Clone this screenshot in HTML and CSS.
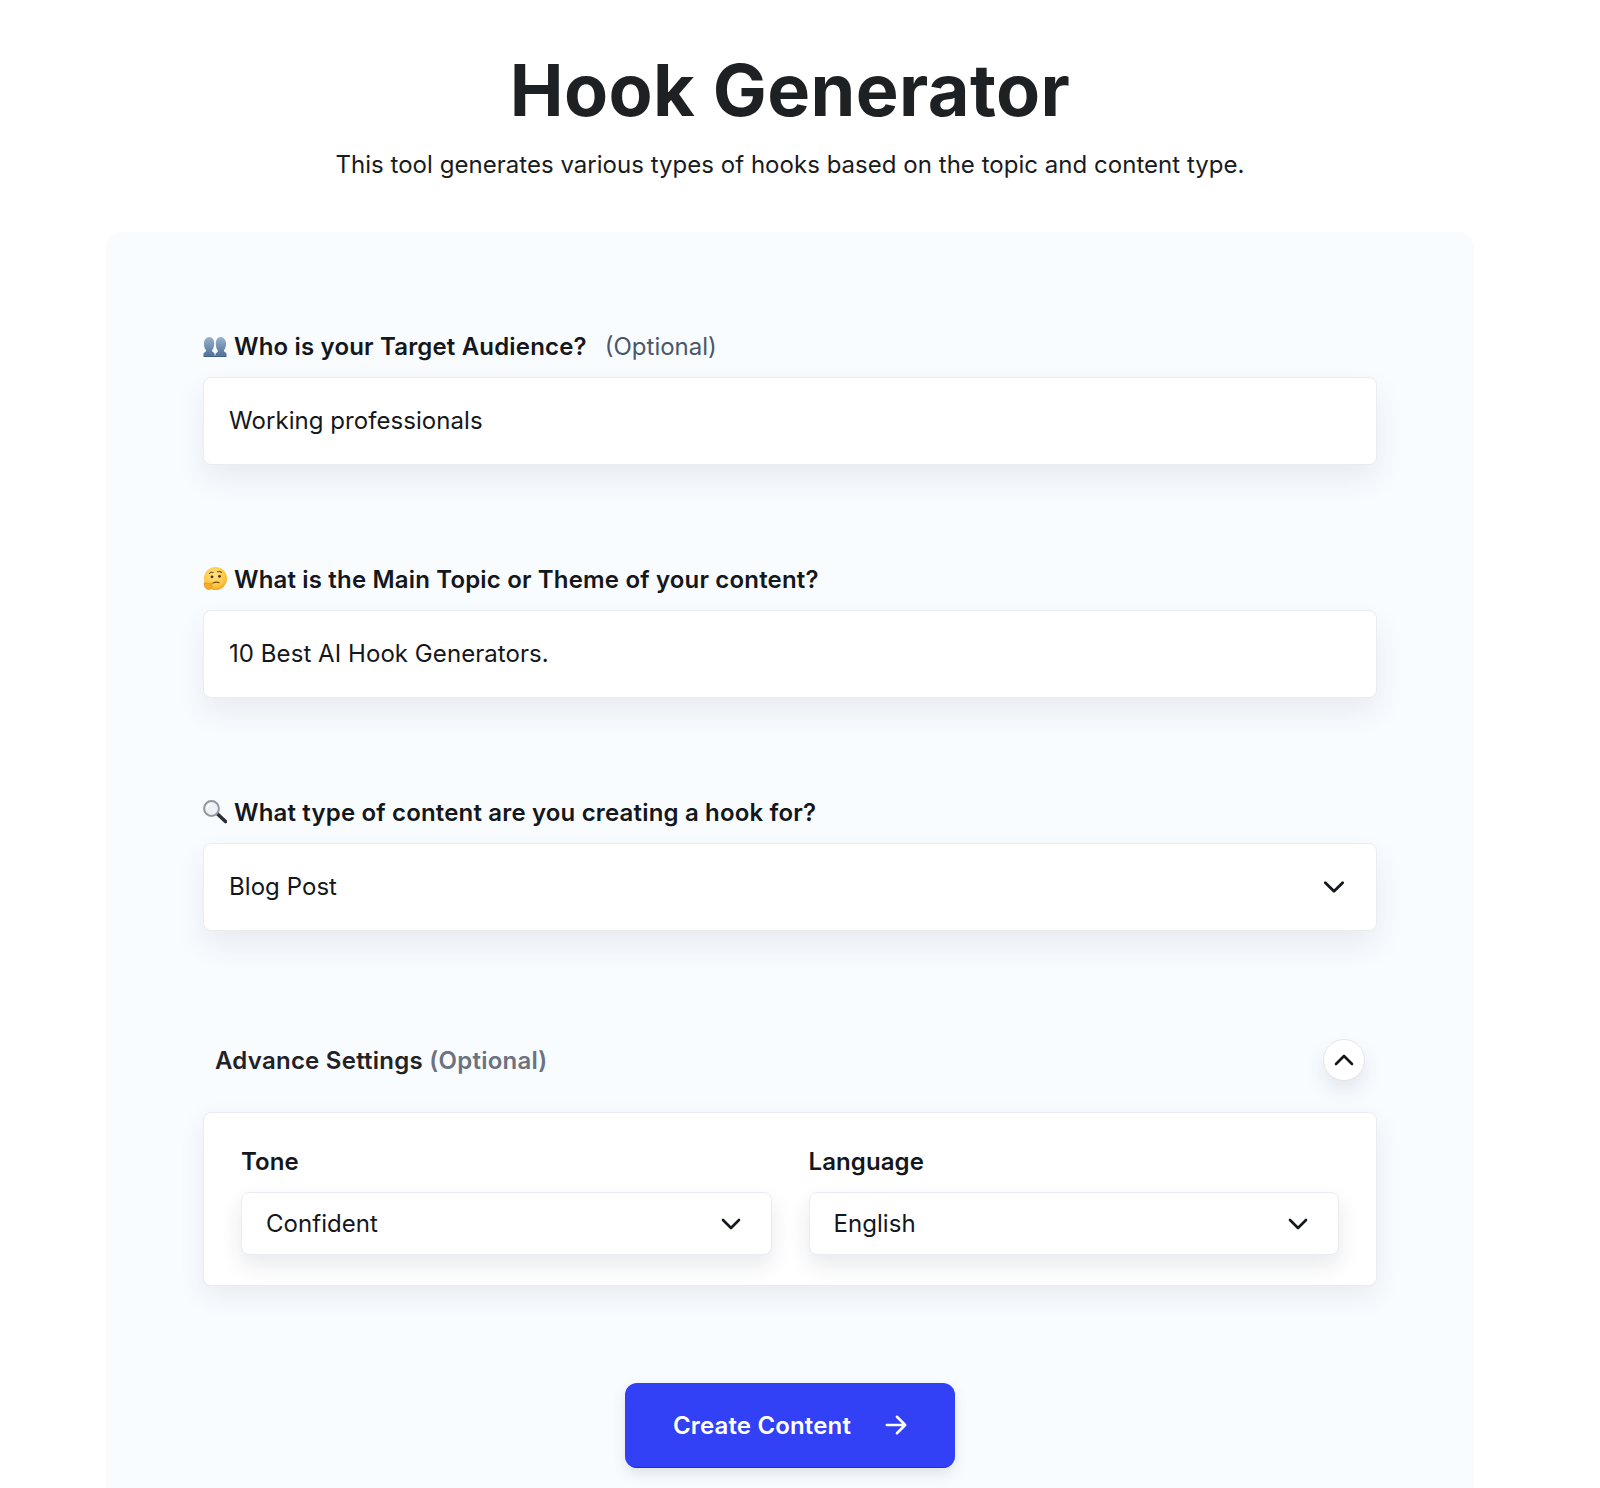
FILE: index.html
```html
<!DOCTYPE html>
<html lang="en">
<head>
<meta charset="utf-8">
<title>Hook Generator</title>
<link rel="stylesheet" href="styles.css">
</head>
<body>
<header class="head">
  <h1 class="title">Hook Generator</h1>
  <p class="sub">This tool generates various types of hooks based on the topic and content type.</p>
</header>
<main class="panel">
  <section class="field">
    <label class="label">
      <svg class="emoji" viewBox="0 0 24 24"><defs><linearGradient id="bust" x1="0" y1="0" x2="0" y2="1"><stop offset="0" stop-color="#9ab2cc"/><stop offset="1" stop-color="#4f7299"/></linearGradient></defs><g transform="translate(0 -4.500) scale(1 1.250)"><path fill="url(#bust)" d="M6.500 6c3 0 4.700 2.300 4.700 5.200 0 2.200-.9 4-1.900 5.100-.4.500-.2 1.100.3 1.400l1.900 1.300V21H.5v-2l2-1.300c.5-.3.700-.9.300-1.400-1-1.100-1.900-2.900-1.900-5.100C.9 8.300 3.500 6 6.500 6z"/><path fill="url(#bust)" d="M17.500 6c3 0 5.600 2.300 5.600 5.200 0 2.200-.9 4-1.900 5.100-.4.500-.2 1.100.3 1.400l2 1.300v2H12.500v-1.700l1.900-1.300c.5-.3.700-.9.300-1.400-1-1.100-1.900-2.900-1.900-5.100C12.800 8.300 14.500 6 17.500 6z"/><rect x=".5" y="20.800" width="23" height="1.200" fill="#3d5f88"/></g></svg>
      <span>Who is your Target Audience?</span><span class="opt">(Optional)</span>
    </label>
    <div class="box">Working professionals</div>
  </section>
  <section class="field">
    <label class="label">
      <svg class="emoji" viewBox="0 0 24 24"><defs><radialGradient id="face" cx=".45" cy=".35" r=".7"><stop offset="0" stop-color="#ffe58a"/><stop offset=".7" stop-color="#fcc53f"/><stop offset="1" stop-color="#f29f1f"/></radialGradient></defs><circle cx="12.500" cy="11.500" r="11.500" fill="url(#face)"/><path d="M6.500 6.500c1-1.200 2.500-1.500 3.700-1M14.500 4.800c1.500-.6 3-.3 4 .7" fill="none" stroke="#7a4a12" stroke-width="1.100" stroke-linecap="round"/><circle cx="9" cy="9.800" r="1.400" fill="#4a2c0c"/><circle cx="16.500" cy="9.300" r="1.400" fill="#4a2c0c"/><path d="M10 16c2-.9 4-1 6-.4" fill="none" stroke="#7a4a12" stroke-width="1.200" stroke-linecap="round"/><path d="M1 16c1.200-.8 3.200-.2 3.800.7l3.700-.8c1-.2 1.400 1 .5 1.400l-1.800.8 1.400.6c.8.500.5 1.500-.2 1.600.2.900-.4 1.400-1 1.400 0 .9-.8 1.300-1.600 1.100-2.500-.3-4.700-2.600-4.800-5.800z" fill="#f7a92c" stroke="#d98a17" stroke-width=".5"/></svg>
      <span>What is the Main Topic or Theme of your content?</span>
    </label>
    <div class="box">10 Best AI Hook Generators.</div>
  </section>
  <section class="field">
    <label class="label">
      <svg class="emoji" viewBox="0 0 24 24"><path d="M14.500 14l8 7.500" stroke="#2a3036" stroke-width="3.600" stroke-linecap="round"/><circle cx="8.500" cy="8.500" r="7.400" fill="#eef2f6" stroke="#8f979f" stroke-width="2"/><path d="M4 7.500c.6-2 2.200-3.300 4.200-3.500" fill="none" stroke="#fff" stroke-width="1.600" stroke-linecap="round"/></svg>
      <span>What type of content are you creating a hook for?</span>
    </label>
    <div class="box box-select"><span>Blog Post</span><svg class="chev" viewBox="0 0 24 24"><path d="M4 8l8 8 8-8"/></svg></div>
  </section>
  <section class="adv">
    <div class="adv-head">
      <h2 class="adv-title">Advance Settings <span class="adv-opt">(Optional)</span></h2>
      <button class="round" type="button" aria-label="Collapse"><svg class="chev chev-up" viewBox="0 0 24 24"><path d="M4 16l8-8 8 8"/></svg></button>
    </div>
    <div class="adv-card">
      <div class="adv-col">
        <div class="mini-label">Tone</div>
        <div class="mini-box"><span>Confident</span><svg class="chev chev-sm" viewBox="0 0 24 24"><path d="M4 8l8 8 8-8"/></svg></div>
      </div>
      <div class="adv-col">
        <div class="mini-label">Language</div>
        <div class="mini-box"><span>English</span><svg class="chev chev-sm" viewBox="0 0 24 24"><path d="M4 8l8 8 8-8"/></svg></div>
      </div>
    </div>
  </section>
  <div class="actions">
    <button class="cta" type="button"><span>Create Content</span><svg class="arrow" viewBox="0 0 24 24"><path d="M2 12h20M13 3l9 9-9 9"/></svg></button>
  </div>
</main>
</body>
</html>
```
FILE: styles.css
```css
* { box-sizing: border-box; }
html, body { margin: 0; padding: 0; background: #fff; }
body {
  height: 1488px;
  overflow: hidden;
  padding-right: 20px;
  font-family: Inter, "Liberation Sans", sans-serif;
  color: #14171c;
}
.head { text-align: center; padding-top: 46px; }
.title {
  margin: 0;
  font-size: 72px;
  line-height: 88px;
  font-weight: 700;
  color: #1e2124;
  letter-spacing: 0.4px;
}
.sub {
  margin: 13px 0 0;
  font-size: 24px;
  line-height: 36px;
  font-weight: 400;
  color: #181b20;
  letter-spacing: 0.03px;
}
.panel {
  width: 1368px;
  height: 1300px;
  margin: 49px auto 0;
  padding: 96px 97px 0;
  background: #f9fcff;
  border-radius: 16px;
}
.field { margin-bottom: 96px; }
.label {
  display: flex;
  align-items: center;
  height: 36px;
  margin-bottom: 13px;
  font-size: 24px;
  font-weight: 600;
  letter-spacing: 0.17px;
  color: #14171c;
}
.emoji { width: 24px; height: 24px; margin-right: 7px; flex: none; }
.opt { margin-left: 18px; font-weight: 400; color: #49566b; letter-spacing: 0; }
.box {
  display: flex;
  align-items: center;
  justify-content: space-between;
  height: 88px;
  padding: 0 25px 1px;
  font-size: 24px;
  letter-spacing: 0.06px;
  background: #fff;
  border: 1px solid #e9ecf1;
  border-radius: 8px;
  box-shadow: 0 14px 30px rgba(30, 40, 70, 0.08);
}
.chev { fill: none; stroke: #14171c; stroke-width: 2.600; stroke-linecap: round; stroke-linejoin: round; }
.box-select .chev { width: 26px; height: 26px; margin-right: 4px; }
.adv-head {
  display: flex;
  align-items: center;
  justify-content: space-between;
  height: 42px;
  padding: 0 12px;
  margin-bottom: 31px;
  margin-top: 108px;
}
.adv-title { margin: 0; font-size: 24px; font-weight: 600; letter-spacing: 0.25px; color: #1f2328; }
.adv-opt { color: #6b7280; }
.round {
  width: 42px;
  height: 42px;
  padding: 0;
  display: flex;
  align-items: center;
  justify-content: center;
  background: #fff;
  border: 1px solid #e3e5ea;
  border-radius: 50%;
  box-shadow: 0 10px 20px rgba(30, 40, 70, 0.1);
}
.chev-up { width: 24px; height: 24px; }
.adv-card {
  display: flex;
  gap: 37px;
  height: 174px;
  padding: 30px 37px 0;
  background: #fff;
  border: 1px solid #e9ecf1;
  border-radius: 8px;
  box-shadow: 0 10px 26px rgba(30, 40, 70, 0.08);
}
.adv-col { flex: 1; }
.mini-label { height: 36px; line-height: 38px; margin-bottom: 13px; font-size: 24px; font-weight: 600; letter-spacing: 0.1px; color: #14171c; }
.mini-box {
  display: flex;
  align-items: center;
  justify-content: space-between;
  height: 63px;
  padding: 0 28px 0 24px;
  font-size: 24px;
  letter-spacing: 0.05px;
  background: #fff;
  border: 1px solid #e9ecf1;
  border-radius: 8px;
  box-shadow: 0 10px 22px rgba(30, 40, 70, 0.1);
}
.chev-sm { width: 24px; height: 24px; }
.actions { display: flex; justify-content: center; margin-top: 97px; }
.cta {
  display: flex;
  align-items: center;
  justify-content: center;
  gap: 34px;
  width: 330px;
  height: 85px;
  background: #3240f6;
  border: 0;
  border-bottom: 1px solid #1a2af0;
  border-radius: 12px;
  color: #fff;
  font-family: inherit;
  font-size: 24px;
  font-weight: 600;
  letter-spacing: 0.15px;
  box-shadow: 0 6px 14px rgba(30, 40, 70, 0.12);
}
.arrow { width: 22px; height: 22px; fill: none; stroke: #fff; stroke-width: 2.800; stroke-linecap: round; stroke-linejoin: round; }
```
